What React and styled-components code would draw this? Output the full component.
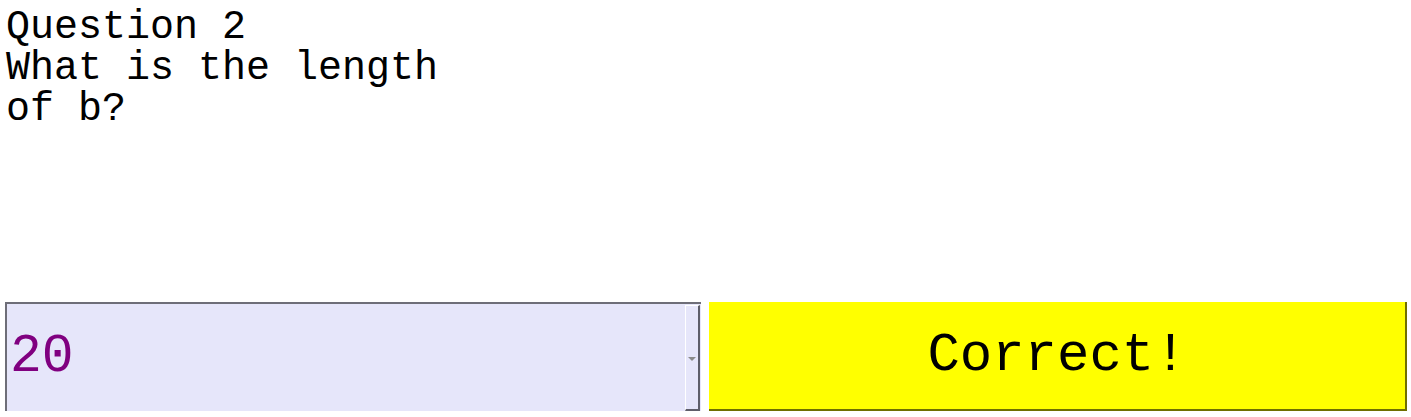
// React Libraries
import React from 'react';

// Styles
import styled, { createGlobalStyle } from 'styled-components';

const GlobalStyle = createGlobalStyle`
  html, body {
    margin: 0;
    padding: 0;
    background: #ffffff;
  }
  body {
    font-family: "Liberation Mono", "Courier New", monospace;
    color: #000000;
  }
`;

const Page = styled.div`
  display: flex;
  flex-direction: column;
  padding: 7px 0 0 5px;
`;

const Question = styled.div`
  width: 470px;
  height: 295px;
  font-size: 40px;
  line-height: 41px;
  padding-left: 1px;
`;

const AnswerRow = styled.div`
  display: flex;
  gap: 8px;
  height: 109px;
`;

const Field = styled.div`
  display: flex;
  align-items: stretch;
  width: 696px;
  box-sizing: border-box;
  background: #e6e6fa;
  border-top: 2px solid #6e6e78;
  border-left: 2px solid #6e6e78;
  padding: 1px 1px 0 0;
`;

const AnswerInput = styled.input`
  flex: 1;
  min-width: 0;
  border: none;
  outline: none;
  background: transparent;
  padding: 0 0 2px 3px;
  font-family: "Liberation Mono", "Courier New", monospace;
  font-size: 53px;
  color: #800080;
`;

const DropButton = styled.div`
  width: 12px;
  display: flex;
  align-items: center;
  justify-content: center;
  border-style: solid;
  border-width: 1px 2px 2px 1px;
  border-color: #ffffff #5e5e6a #5e5e6a #ffffff;
`;

const Arrow = styled.div`
  width: 0;
  height: 0;
  border-left: 4px solid transparent;
  border-right: 4px solid transparent;
  border-top: 4px solid #8a8a8a;
  margin-top: 2px;
`;

const ResultButton = styled.button`
  width: 698px;
  box-sizing: border-box;
  background: ${props => (props.correct ? '#ffff00' : '#ff8080')};
  border: none;
  border-right: 2px solid #6f6f00;
  border-bottom: 2px solid #6f6f00;
  padding: 0;
  font-family: "Liberation Mono", "Courier New", monospace;
  font-size: 54px;
  color: #000000;
`;

// Component
function App() {
  return (
    <>
      <GlobalStyle />
      <Page>
        <Question>
          Question 2
          <br />
          What is the length of b?
        </Question>
        <AnswerRow>
          <Field>
            <AnswerInput value="20" readOnly />
            <DropButton>
              <Arrow />
            </DropButton>
          </Field>
          <ResultButton correct>Correct!</ResultButton>
        </AnswerRow>
      </Page>
    </>
  );
}

export default App;
